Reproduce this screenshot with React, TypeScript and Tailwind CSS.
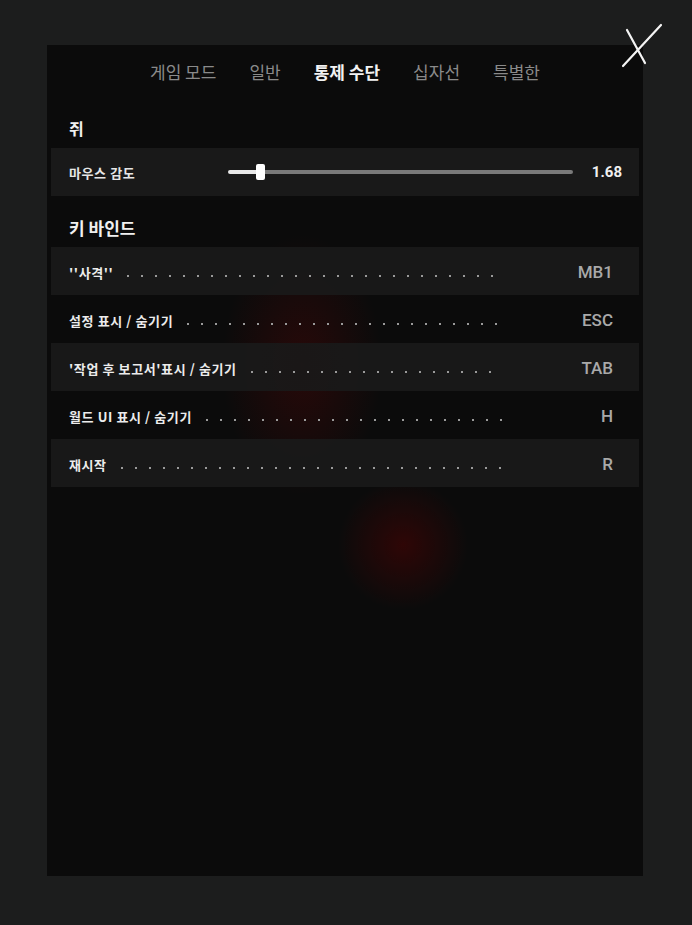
import React from "react";

const tabs = ["게임 모드", "일반", "통제 수단", "십자선", "특별한"];

const binds = [
  { label: "''사격''", key: "MB1" },
  { label: "설정 표시 / 숨기기", key: "ESC" },
  { label: "'작업 후 보고서'표시 / 숨기기", key: "TAB" },
  { label: "월드 UI 표시 / 숨기기", key: "H" },
  { label: "재시작", key: "R" },
];

function CloseIcon() {
  return (
    <svg width="48" height="52" viewBox="0 0 48 52" fill="none">
      <path d="M5 46 L43 5" stroke="#f4f4f4" strokeWidth="2.2" strokeLinecap="round" />
      <path d="M9 10 L27 43" stroke="#f4f4f4" strokeWidth="2.2" strokeLinecap="round" />
    </svg>
  );
}

export default function App() {
  return (
    <div
      className="w-[692px] h-[925px] bg-[#1c1d1d] overflow-hidden relative"
      style={{ fontFamily: "'Noto Sans CJK KR', 'Noto Sans', sans-serif" }}
    >
      <div className="absolute left-[618px] top-[20px]">
        <CloseIcon />
      </div>
      <div className="ml-[47px] mt-[45px] w-[596px] h-[831px] bg-[#0b0b0b] bg-[radial-gradient(ellipse_80px_130px_at_255px_320px,rgba(80,6,6,0.42),transparent),radial-gradient(circle_at_356px_500px,rgba(90,0,0,0.45),transparent_65px)] flex flex-col">
        <div className="flex justify-center gap-[33px] pt-[14px] h-[61px] text-[17px] leading-[26px]">
          {tabs.map((t, i) => (
            <span
              key={t}
              className={i === 2 ? "text-[#f2f2f2] font-bold" : "text-[#8a8a8a]"}
            >
              {t}
            </span>
          ))}
        </div>
        <div className="pl-[22px] h-[42px] pt-[11px] text-[16px] font-bold text-[#f0f0f0] leading-[22px]">
          쥐
        </div>
        <div className="mx-[4px] h-[48px] bg-[#191919] flex items-center pl-[18px] pr-[17px]">
          <span className="w-[159px] text-[13px] tracking-[0.6px] font-bold text-[#e6e6e6] pt-[1px]">
            마우스 감도
          </span>
          <div className="flex items-center w-[345px]">
            <div className="h-[4px] w-[28px] bg-[#e8e8e8] rounded-l-full" />
            <div className="h-[16px] w-[9px] bg-white rounded-[2px]" />
            <div className="h-[4px] flex-1 bg-[#7a7a7a] rounded-r-full" />
          </div>
          <span
            className="ml-auto text-[15px] font-bold text-[#f0f0f0]"
            style={{ fontFamily: "Roboto, 'Liberation Sans', sans-serif" }}
          >
            1.68
          </span>
        </div>
        <div className="pl-[22px] h-[51px] pt-[20px] text-[17px] font-bold text-[#f0f0f0] leading-[24px]">
          키 바인드
        </div>
        <div className="flex flex-col mx-[4px]">
          {binds.map((b, i) => (
            <div
              key={b.key}
              className={`h-[48px] flex items-center pl-[18px] pr-[26px] pt-[3px] ${
                i % 2 === 0 ? "bg-[#191919]/90" : "bg-transparent"
              }`}
            >
              <span className="text-[13px] tracking-[0.6px] font-bold text-[#ececec] whitespace-nowrap">
                {b.label}
              </span>
              <div className="flex-1 ml-[8px] mr-[70px] h-[4px] mt-[6px] bg-[radial-gradient(circle,#9a9a9a_0.9px,transparent_1.3px)] bg-[length:14px_4px] bg-repeat-x" />
              <span
                className="w-[40px] text-right text-[17px] font-medium text-[#a9a9a9]"
                style={{ fontFamily: "Roboto, 'Liberation Sans', sans-serif" }}
              >
                {b.key}
              </span>
            </div>
          ))}
        </div>
      </div>
    </div>
  );
}
